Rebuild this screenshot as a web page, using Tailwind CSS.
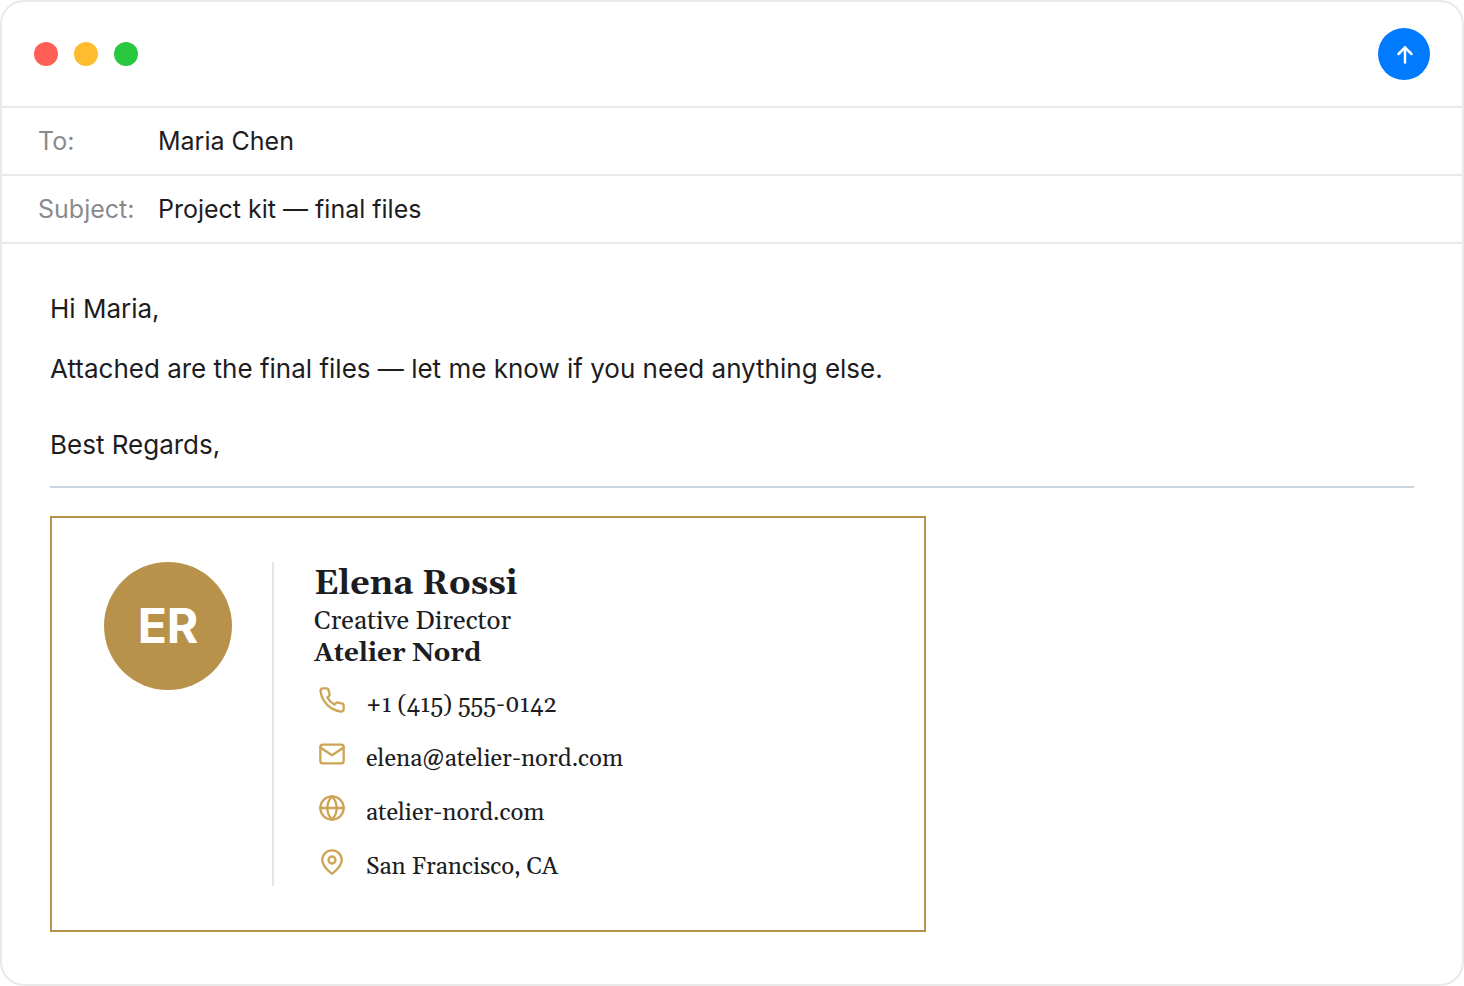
<!DOCTYPE html>
<html lang="en">
  <head>
    <meta charset="UTF-8" />
    <meta name="viewport" content="width=device-width, initial-scale=1.0" />
    <title>Project kit — final files</title>
    <script src="https://cdn.jsdelivr.net/npm/@tailwindcss/browser@4"></script>
  </head>
  <body class="bg-white font-['Inter',sans-serif] text-[#1d1d1f]">
    <!-- Compose window -->
    <main class="min-h-screen rounded-3xl border-2 border-[#e9e9ea] bg-white">
      <!-- Title bar -->
      <header class="flex items-center justify-between border-b-2 border-[#e9e9ea] px-8 py-[26px]">
        <div class="flex gap-4">
          <span class="size-6 rounded-full bg-[#ff5f57]"></span>
          <span class="size-6 rounded-full bg-[#febc2e]"></span>
          <span class="size-6 rounded-full bg-[#28c840]"></span>
        </div>
        <button type="button" aria-label="Send" class="flex size-[52px] items-center justify-center rounded-full bg-[#007aff] text-white">
          <svg class="size-6" viewBox="0 0 24 24" fill="none" stroke="currentColor" stroke-width="2.5" stroke-linecap="round" stroke-linejoin="round">
            <path d="M13 20.5V5.5" />
            <path d="M6.500 12 13 5.500 19.500 12" />
          </svg>
        </button>
      </header>

      <!-- Fields -->
      <div class="flex items-center border-b-2 border-[#e9e9ea] px-9 text-[25px]">
        <label for="to" class="w-[120px] leading-[66px] text-[#8a8a8e]">To:</label>
        <input id="to" type="text" value="Maria Chen" class="h-[66px] flex-1 outline-none" />
      </div>
      <div class="flex items-center border-b-2 border-[#e9e9ea] px-9 text-[25px]">
        <label for="subject" class="w-[120px] leading-[66px] text-[#8a8a8e]">Subject:</label>
        <input id="subject" type="text" value="Project kit — final files" class="h-[66px] flex-1 outline-none" />
      </div>

      <!-- Message -->
      <div class="px-12 pt-11 pb-[52px] text-[26px] leading-[42px]">
        <p>Hi Maria,</p>
        <p class="mt-[18px]">Attached are the final files — let me know if you need anything else.</p>
        <p class="mt-[34px]">Best Regards,</p>
        <hr class="mt-5 border-t-2 border-[#cbd5e1]" />

        <!-- Signature -->
        <section class="mt-7 flex max-w-[876px] border-2 border-[#b8924a] px-[52px] py-11 font-['Georgia','Gelasio','Liberation_Serif',serif]">
          <div class="pr-10">
            <div class="flex size-32 items-center justify-center rounded-full bg-[#b8924a] font-['Inter',sans-serif] text-5xl font-bold text-white">ER</div>
          </div>
          <div class="border-l-2 border-[#e2e5e9] pl-10">
            <h2 class="text-[34px] leading-[44px] font-bold">Elena Rossi</h2>
            <p class="text-[26px] leading-8">Creative Director</p>
            <p class="text-[26px] leading-8 font-bold">Atelier Nord</p>
            <ul class="text-2xl leading-[38px]">
              <li class="flex gap-5 px-1 pt-4">
                <svg class="size-7 text-[#cda555]" viewBox="0 0 24 24" fill="none" stroke="currentColor" stroke-width="2" stroke-linecap="round" stroke-linejoin="round">
                  <path d="M22 16.92v3a2 2 0 0 1-2.18 2 19.79 19.79 0 0 1-8.63-3.07 19.5 19.5 0 0 1-6-6 19.79 19.79 0 0 1-3.07-8.67A2 2 0 0 1 4.11 2h3a2 2 0 0 1 2 1.72 12.84 12.84 0 0 0 .7 2.81 2 2 0 0 1-.45 2.11L8.09 9.91a16 16 0 0 0 6 6l1.27-1.27a2 2 0 0 1 2.11-.45 12.84 12.84 0 0 0 2.81.7A2 2 0 0 1 22 16.92z" />
                </svg>
                <span>+1 (415) 555-0142</span>
              </li>
              <li class="flex gap-5 px-1 pt-4">
                <svg class="size-7 text-[#cda555]" viewBox="0 0 24 24" fill="none" stroke="currentColor" stroke-width="2" stroke-linecap="round" stroke-linejoin="round">
                  <rect x="2" y="4" width="20" height="16" rx="2" />
                  <path d="M22 6.5 12 13 2 6.5" />
                </svg>
                <span>elena@atelier-nord.com</span>
              </li>
              <li class="flex gap-5 px-1 pt-4">
                <svg class="size-7 text-[#cda555]" viewBox="0 0 24 24" fill="none" stroke="currentColor" stroke-width="2" stroke-linecap="round" stroke-linejoin="round">
                  <circle cx="12" cy="12" r="10" />
                  <path d="M12 2a14.5 14.5 0 0 0 0 20 14.5 14.5 0 0 0 0-20" />
                  <path d="M2 12h20" />
                </svg>
                <span>atelier-nord.com</span>
              </li>
              <li class="flex gap-5 px-1 pt-4">
                <svg class="size-7 text-[#cda555]" viewBox="0 0 24 24" fill="none" stroke="currentColor" stroke-width="2" stroke-linecap="round" stroke-linejoin="round">
                  <path d="M20.3 10.3c0 6-8.3 11.7-8.3 11.7s-8.3-5.7-8.3-11.7a8.3 8.3 0 0 1 16.6 0z" />
                  <circle cx="12" cy="10.3" r="3" />
                </svg>
                <span>San Francisco, CA</span>
              </li>
            </ul>
          </div>
        </section>
      </div>
    </main>
  </body>
</html>
